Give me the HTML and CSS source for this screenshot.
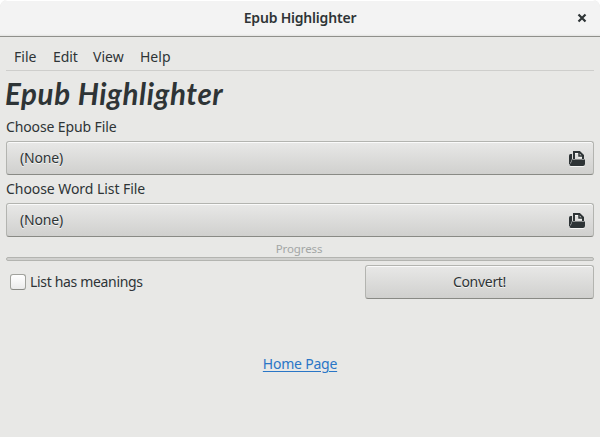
FILE: index.html
```html
<!DOCTYPE html>
<html lang="en">
<head>
<meta charset="utf-8">
<title>Epub Highlighter</title>
<link rel="stylesheet" href="styles.css">
</head>
<body>
<div class="window">
  <header class="titlebar">
    <span class="title">Epub Highlighter</span>
    <svg class="close" width="10" height="10" viewBox="0 0 10 10"><path d="M1.500 1.500 8.500 8.500M8.500 1.500 1.500 8.500" stroke="#2e3436" stroke-width="2.200"/></svg>
  </header>
  <main class="content">
    <nav class="menubar"><span class="file">File</span><span class="edit">Edit</span><span class="view">View</span><span class="help">Help</span></nav>
    <h1 class="heading">Epub Highlighter</h1>
    <div class="label epub">Choose Epub File</div>
    <button class="button chooser"><span class="none">(None)</span>
      <svg width="16" height="16" viewBox="0 0 16 16"><path d="M0 13V4.500Q0 3 1.500 3H3V8L1 13z" fill="#2e3436"/><path d="M5 8V1H10.500L14 4.500V8" fill="none" stroke="#2e3436" stroke-width="2"/><path d="M10 1V5H14" fill="none" stroke="#2e3436" stroke-width="1.500"/><path d="M3 8.500H16V13Q16 15 14 15H2Q0 15 .5 13L2 12z" fill="#2e3436"/></svg>
    </button>
    <div class="label words">Choose Word List File</div>
    <button class="button chooser"><span class="none">(None)</span>
      <svg width="16" height="16" viewBox="0 0 16 16"><path d="M0 13V4.500Q0 3 1.500 3H3V8L1 13z" fill="#2e3436"/><path d="M5 8V1H10.500L14 4.500V8" fill="none" stroke="#2e3436" stroke-width="2"/><path d="M10 1V5H14" fill="none" stroke="#2e3436" stroke-width="1.500"/><path d="M3 8.500H16V13Q16 15 14 15H2Q0 15 .5 13L2 12z" fill="#2e3436"/></svg>
    </button>
    <div class="progress-label">Progress</div>
    <div class="progress"></div>
    <div class="actions">
      <label class="check"><span class="box"></span><span class="meanings">List has meanings</span></label>
      <button class="button convert"><span>Convert!</span></button>
    </div>
    <div class="footer"><a class="link">Home Page</a></div>
  </main>
</div>
</body>
</html>
```
FILE: styles.css
```css
* { box-sizing: border-box; }
body {
  margin: 0;
  background: #fff;
  color: #2e3436;
  font: 14px/20px "Noto Sans", "Open Sans", sans-serif;
}
.window {
  width: 600px;
  height: 437px;
  overflow: hidden;
  border-radius: 7px 7px 0 0;
  background: #e8e8e6;
}
.titlebar {
  display: grid;
  grid-template-columns: 1fr auto 1fr;
  align-items: center;
  height: 37px;
  padding-right: 13px;
  padding-left: 13px;
  border-bottom: 1px solid #8f908b;
  border-radius: 7px 7px 0 0;
  background: linear-gradient(#fff 1px, #f3f3f3 1px, #f3f3f3 34px, #e3e3e1);
}
.title { grid-column: 2; font-weight: 600; letter-spacing: -0.2px; }
.close { justify-self: end; }
.content { padding: 0 6px; }
.menubar {
  display: flex;
  gap: 16px;
  height: 34px;
  padding: 10px 8px 0;
  border-bottom: 1px solid #cececc;
}
.file { width: 23px; }
.edit { width: 24px; letter-spacing: -0.1px; }
.view { width: 31px; }
.help { width: 31px; }
.heading {
  height: 46px;
  margin: 0 0 0 -1px;
  font-family: Lato, "Noto Sans", sans-serif;
  font-size: 29.5px;
  line-height: 45px;
  font-style: italic;
  font-weight: 700;
  letter-spacing: 0.6px;
  white-space: nowrap;
}
.label { height: 24px; line-height: 20px; letter-spacing: -0.12px; }
.label.words { height: 28px; padding-top: 4px; letter-spacing: -0.06px; }
.button {
  display: flex;
  align-items: center;
  height: 34px;
  padding: 0 8px 0 13px;
  border: 1px solid #b3b4b0;
  border-bottom-color: #898a85;
  border-radius: 3px;
  background: linear-gradient(#e8e8e7, #d0d0ce);
  box-shadow: inset 0 1px #fafafa;
  color: inherit;
  font: inherit;
  text-shadow: 0 1px rgba(255, 255, 255, 0.75);
}
.none { letter-spacing: -0.15px; }
.chooser { width: 100%; justify-content: space-between; }
.chooser svg { margin-top: 1px; filter: drop-shadow(0 1px rgba(255, 255, 255, 0.75)); }
.progress-label {
  height: 20px;
  color: #a3a6a5;
  font-size: 11.5px;
  letter-spacing: -0.1px;
  line-height: 24px;
  text-align: center;
  text-indent: -2px;
}
.progress {
  height: 4px;
  border: 1px solid #b3b4b0;
  border-radius: 2px;
  background: #d0d0ce;
}
.actions { display: flex; justify-content: space-between; margin-top: 4px; }
.check { display: flex; align-items: center; gap: 4px; padding-left: 4px; }
.box {
  width: 16px;
  height: 16px;
  border: 1px solid #a1a29d;
  border-bottom-color: #898a85;
  border-radius: 3px;
  background: linear-gradient(#fff, #ebebeb);
}
.meanings { letter-spacing: -0.33px; }
.convert { width: 229px; padding: 0; justify-content: center; letter-spacing: -0.3px; }
.footer { margin-top: 55px; text-align: center; }
.link {
  color: #2a76c6;
  letter-spacing: -0.22px;
  text-decoration: underline;
  text-decoration-thickness: 1px;
  text-underline-offset: 2px;
}
```
